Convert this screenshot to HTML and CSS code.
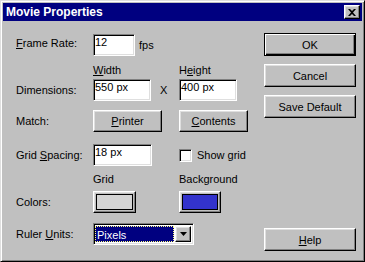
FILE: index.html
```html
<!DOCTYPE html>
<html lang="en">
<head>
    <meta charset="UTF-8">
    <meta name="viewport" content="width=device-width, initial-scale=1.0">
    <title>Movie Properties</title>
    <link rel="stylesheet" href="styles.css">
</head>
<body>
    <div class="window">
        <div class="titlebar">
            <span class="title">Movie Properties</span>
            <button class="close" aria-label="Close">
                <svg width="8" height="7" viewBox="0 0 8 7"><path d="M0 0h2l2 2 2-2h2L5 3.5 8 7H6L4 5 2 7H0l3-3.5z" fill="#000"/></svg>
            </button>
        </div>
        <div class="body">
            <form class="form">
                <label class="label label-top"><u>F</u>rame Rate:</label>
                <div class="cell span">
                    <input class="field fr" type="text" value="12">
                    <span class="unit">fps</span>
                </div>

                <span class="head first"><u>W</u>idth</span>
                <span class="head">H<u>e</u>ight</span>

                <label class="label">Dimensions:</label>
                <div class="cell">
                    <input class="field wide" type="text" value="550 px">
                    <span class="times">X</span>
                </div>
                <div class="cell">
                    <input class="field wide" type="text" value="400 px">
                </div>

                <label class="label">Match:</label>
                <div class="cell"><button type="button" class="btn match"><u>P</u>rinter</button></div>
                <div class="cell"><button type="button" class="btn match"><u>C</u>ontents</button></div>

                <label class="label">Grid <u>S</u>pacing:</label>
                <div class="cell">
                    <input class="field spacing" type="text" value="18 px">
                </div>
                <div class="cell check">
                    <span class="checkbox"></span>
                    <span>Show grid</span>
                </div>

                <span class="head first low">Grid</span>
                <span class="head low">Background</span>

                <label class="label">Colors:</label>
                <div class="cell">
                    <button type="button" class="btn swatch-btn"><span class="swatch grid-color"></span></button>
                </div>
                <div class="cell">
                    <button type="button" class="btn swatch-btn bg-btn"><span class="swatch bg-color"></span></button>
                </div>

                <label class="label">Ruler <u>U</u>nits:</label>
                <div class="cell span">
                    <div class="combo">
                        <span class="combo-value">Pixels</span>
                        <span class="combo-arrow">
                            <svg width="7" height="4" viewBox="0 0 7 4"><path d="M0 0h7L3.5 4z" fill="#000"/></svg>
                        </span>
                    </div>
                </div>
            </form>
            <div class="actions">
                <button type="button" class="btn default">OK</button>
                <button type="button" class="btn">Cancel</button>
                <button type="button" class="btn">Save Default</button>
                <button type="button" class="btn help"><u>H</u>elp</button>
            </div>
        </div>
    </div>
</body>
</html>
```

FILE: styles.css
```css
body {
    margin: 0;
    background-color: #c0c0c0;
    font-family: "Liberation Sans", Arial, sans-serif;
    font-size: 11px;
    color: #000;
}

.window {
    box-sizing: border-box;
    width: 365px;
    height: 262px;
    padding: 2px;
    border: 1px solid;
    border-color: #dfdfdf #000 #000 #dfdfdf;
    box-shadow: inset 1px 1px #fff, inset -1px -1px #808080;
    display: flex;
    flex-direction: column;
}

.titlebar {
    height: 18px;
    padding: 0 2px 0 3px;
    background-color: #000080;
    color: #fff;
    display: flex;
    align-items: center;
    justify-content: space-between;
}

.title {
    font-weight: bold;
    font-size: 12px;
}

.btn,
.close,
.combo-arrow {
    box-sizing: border-box;
    padding: 0;
    background-color: #c0c0c0;
    border: 1px solid;
    border-color: #fff #000 #000 #fff;
    box-shadow: inset -1px -1px #808080, inset 1px 1px #dfdfdf;
    font: inherit;
    color: #000;
}

.close {
    width: 16px;
    height: 14px;
    display: flex;
    align-items: center;
    justify-content: center;
    padding-right: 1px;
}

.body {
    flex: 1;
    display: flex;
}

.form {
    padding: 13px 0 0 13px;
    display: grid;
    grid-template-columns: 77px 86px 80px;
    grid-template-rows: 22px 23px 22px 31px 34px 25px 22px 32px;
    align-items: end;
}

.label {
    line-height: 22px;
    white-space: nowrap;
}

.label-top {
    padding-bottom: 2px;
}

.head {
    line-height: 14px;
    margin-bottom: 2px;
}

.head.first {
    grid-column: 2;
}

.head.low {
    margin-bottom: 5px;
}

.cell {
    height: 22px;
    display: flex;
    align-items: center;
}

.span {
    grid-column: 2 / span 2;
}

.field {
    box-sizing: border-box;
    height: 22px;
    padding: 0 1px 7px;
    margin: 0;
    border: 1px solid;
    border-color: #808080 #fff #fff #808080;
    box-shadow: inset 1px 1px #000, inset -1px -1px #dfdfdf;
    background-color: #fff;
    font: inherit;
    color: #000;
    outline: none;
}

.fr {
    width: 42px;
}

.wide {
    width: 58px;
}

.spacing {
    width: 59px;
}

.unit {
    margin-left: 4px;
}

.times {
    margin-left: 9px;
}

.match {
    width: 69px;
    height: 22px;
}

.check {
    gap: 5px;
}

.checkbox {
    box-sizing: border-box;
    width: 13px;
    height: 13px;
    border: 1px solid;
    border-color: #808080 #fff #fff #808080;
    box-shadow: inset 1px 1px #000, inset -1px -1px #dfdfdf;
    background-color: #fff;
}

.swatch-btn {
    width: 43px;
    height: 22px;
    padding: 2px;
    display: flex;
}

.bg-btn {
    width: 42px;
}

.swatch {
    flex: 1;
    border: 1px solid #000;
}

.grid-color {
    background-color: #d4d4d4;
}

.bg-color {
    background-color: #3333cc;
}

.combo {
    box-sizing: border-box;
    width: 101px;
    height: 22px;
    padding: 2px;
    border: 1px solid;
    border-color: #808080 #fff #fff #808080;
    box-shadow: inset 1px 1px #000, inset -1px -1px #dfdfdf;
    background-color: #fff;
    display: flex;
}

.combo-value {
    flex: 1;
    margin: 0 1px 0 -1px;
    padding-left: 1px;
    border: 1px dotted #ffff80;
    background-color: #000080;
    color: #fff;
    line-height: 16px;
}

.combo-arrow {
    width: 16px;
    display: flex;
    align-items: center;
    justify-content: center;
}

.actions {
    width: 92px;
    margin: 0 6px 0 auto;
    padding: 12px 0 8px;
    display: flex;
    flex-direction: column;
    gap: 8px;
}

.actions .btn {
    height: 23px;
}

.default {
    border-color: #000;
    box-shadow: inset 1px 1px #fff, inset -1px -1px #000, inset -2px -2px #808080;
}

.help {
    margin-top: auto;
}
```
